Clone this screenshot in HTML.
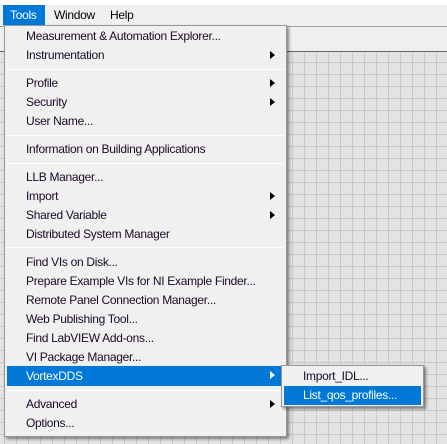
<!DOCTYPE html>
<html><head><style>
*{margin:0;padding:0;box-sizing:border-box}
body{width:447px;height:444px;overflow:hidden;position:relative;background:#fff;font-family:"Liberation Sans",sans-serif;font-size:12px;letter-spacing:-0.3px;color:#000}
.bar{position:absolute;left:0;top:5px;width:447px;height:21px;background:#f0f0f0}
.tb{position:absolute;left:0;top:26px;width:447px;height:26px;background:#f0f0f0;border-top:1px solid #a0a0a0;border-bottom:1px solid #646464}
.grid{position:absolute;left:0;top:52px;width:447px;height:392px;background-color:#e3e3e3;background-image:linear-gradient(#c8c8c8 1px,transparent 1px),linear-gradient(90deg,#c8c8c8 1px,transparent 1px);background-size:12px 12px;background-position:4px 10px}
.mt{position:absolute;top:5px;height:20px;line-height:20px;padding:0 8px}
.menu{position:absolute;left:4px;top:25px;width:283px;height:412px;background:#f0f0f0;border:1px solid #979797;box-shadow:2px 2px 3px rgba(0,0,0,.45)}
.it{position:absolute;left:2px;width:277px;height:19px;line-height:19px;padding-left:19px;color:#1a0a24}
.hl{background:#0078d7;color:#fff}
.sep{position:absolute;left:2px;width:277px;height:1px;background:#a0a0a0;border-bottom:1px solid #fff}
.ar{position:absolute;right:9px;top:5px;width:0;height:0;border-top:4.5px solid transparent;border-bottom:4.5px solid transparent;border-left:5px solid #000}
.hl .ar{border-left-color:#fff}
.sub{position:absolute;left:281px;top:365px;width:143px;height:42px;background:#f0f0f0;border:1px solid #979797;box-shadow:2px 2px 3px rgba(0,0,0,.45)}
.sub .it{width:137px;padding-left:19px}
</style></head><body>
<div class="grid"></div>
<div class="tb"></div>
<div class="bar"></div>
<div class="mt hl" style="left:3px;width:42px;padding:0 0 0 7px">Tools</div>
<div class="mt" style="left:46px">Window</div>
<div class="mt" style="left:102px">Help</div>
<div class="menu">
<div class="it" style="top:1px">Measurement &amp; Automation Explorer...</div>
<div class="it" style="top:20px">Instrumentation<span class="ar"></span></div>
<div class="sep" style="top:43px"></div>
<div class="it" style="top:48px">Profile<span class="ar"></span></div>
<div class="it" style="top:67px">Security<span class="ar"></span></div>
<div class="it" style="top:86px">User Name...</div>
<div class="sep" style="top:109px"></div>
<div class="it" style="top:114px">Information on Building Applications</div>
<div class="sep" style="top:137px"></div>
<div class="it" style="top:142px">LLB Manager...</div>
<div class="it" style="top:161px">Import<span class="ar"></span></div>
<div class="it" style="top:180px">Shared Variable<span class="ar"></span></div>
<div class="it" style="top:199px">Distributed System Manager</div>
<div class="sep" style="top:221px"></div>
<div class="it" style="top:227px">Find VIs on Disk...</div>
<div class="it" style="top:246px">Prepare Example VIs for NI Example Finder...</div>
<div class="it" style="top:265px">Remote Panel Connection Manager...</div>
<div class="it" style="top:284px">Web Publishing Tool...</div>
<div class="it" style="top:303px">Find LabVIEW Add-ons...</div>
<div class="it" style="top:322px">VI Package Manager...</div>
<div class="it hl" style="top:340px;height:20px;line-height:20px">VortexDDS<span class="ar"></span></div>
<div class="sep" style="top:364px"></div>
<div class="it" style="top:369px">Advanced<span class="ar"></span></div>
<div class="it" style="top:388px">Options...</div>
</div>
<div class="sub">
<div class="it" style="top:1px">Import_IDL...</div>
<div class="it hl" style="top:20px">List_qos_profiles...</div>
</div>
</body></html>
